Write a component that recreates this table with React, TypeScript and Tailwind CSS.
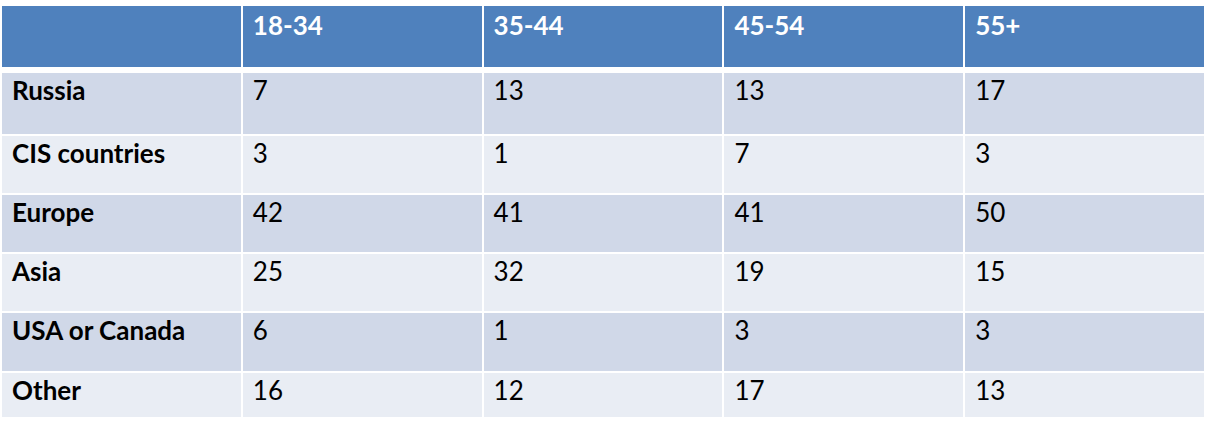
const headers = ["", "18-34", "35-44", "45-54", "55+"];

const rows: { name: string; values: number[]; h: string }[] = [
  { name: "Russia", values: [7, 13, 13, 17], h: "h-[61px]" },
  { name: "CIS countries", values: [3, 1, 7, 3], h: "h-[57px]" },
  { name: "Europe", values: [42, 41, 41, 50], h: "h-[57px]" },
  { name: "Asia", values: [25, 32, 19, 15], h: "h-[57px]" },
  { name: "USA or Canada", values: [6, 1, 3, 3], h: "h-[58px]" },
  { name: "Other", values: [16, 12, 17, 13], h: "h-[44px]" },
];

export default function App() {
  return (
    <div className="w-[1206px] h-[427px] bg-white pt-[6px] px-[2px] font-['Lato',sans-serif] text-[26px] leading-[1.2] text-black">
      <div className="grid grid-cols-5 gap-x-[2px] h-[61px]">
        {headers.map((h, i) => (
          <div key={i} className="bg-[#4f81bd] text-white font-bold pl-[10px] pt-[4px]">
            {h}
          </div>
        ))}
      </div>
      <div className="mt-[6px] flex flex-col gap-y-[2px]">
        {rows.map((r, i) => (
          <div key={r.name} className={`grid grid-cols-5 gap-x-[2px] ${r.h}`}>
            <div className={`${i % 2 === 0 ? "bg-[#d0d8e8]" : "bg-[#e9edf4]"} font-bold pl-[10px] pt-[2px]`}>
              {r.name}
            </div>
            {r.values.map((v, j) => (
              <div key={j} className={`${i % 2 === 0 ? "bg-[#d0d8e8]" : "bg-[#e9edf4]"} pl-[10px] pt-[2px]`}>
                {v}
              </div>
            ))}
          </div>
        ))}
      </div>
    </div>
  );
}
